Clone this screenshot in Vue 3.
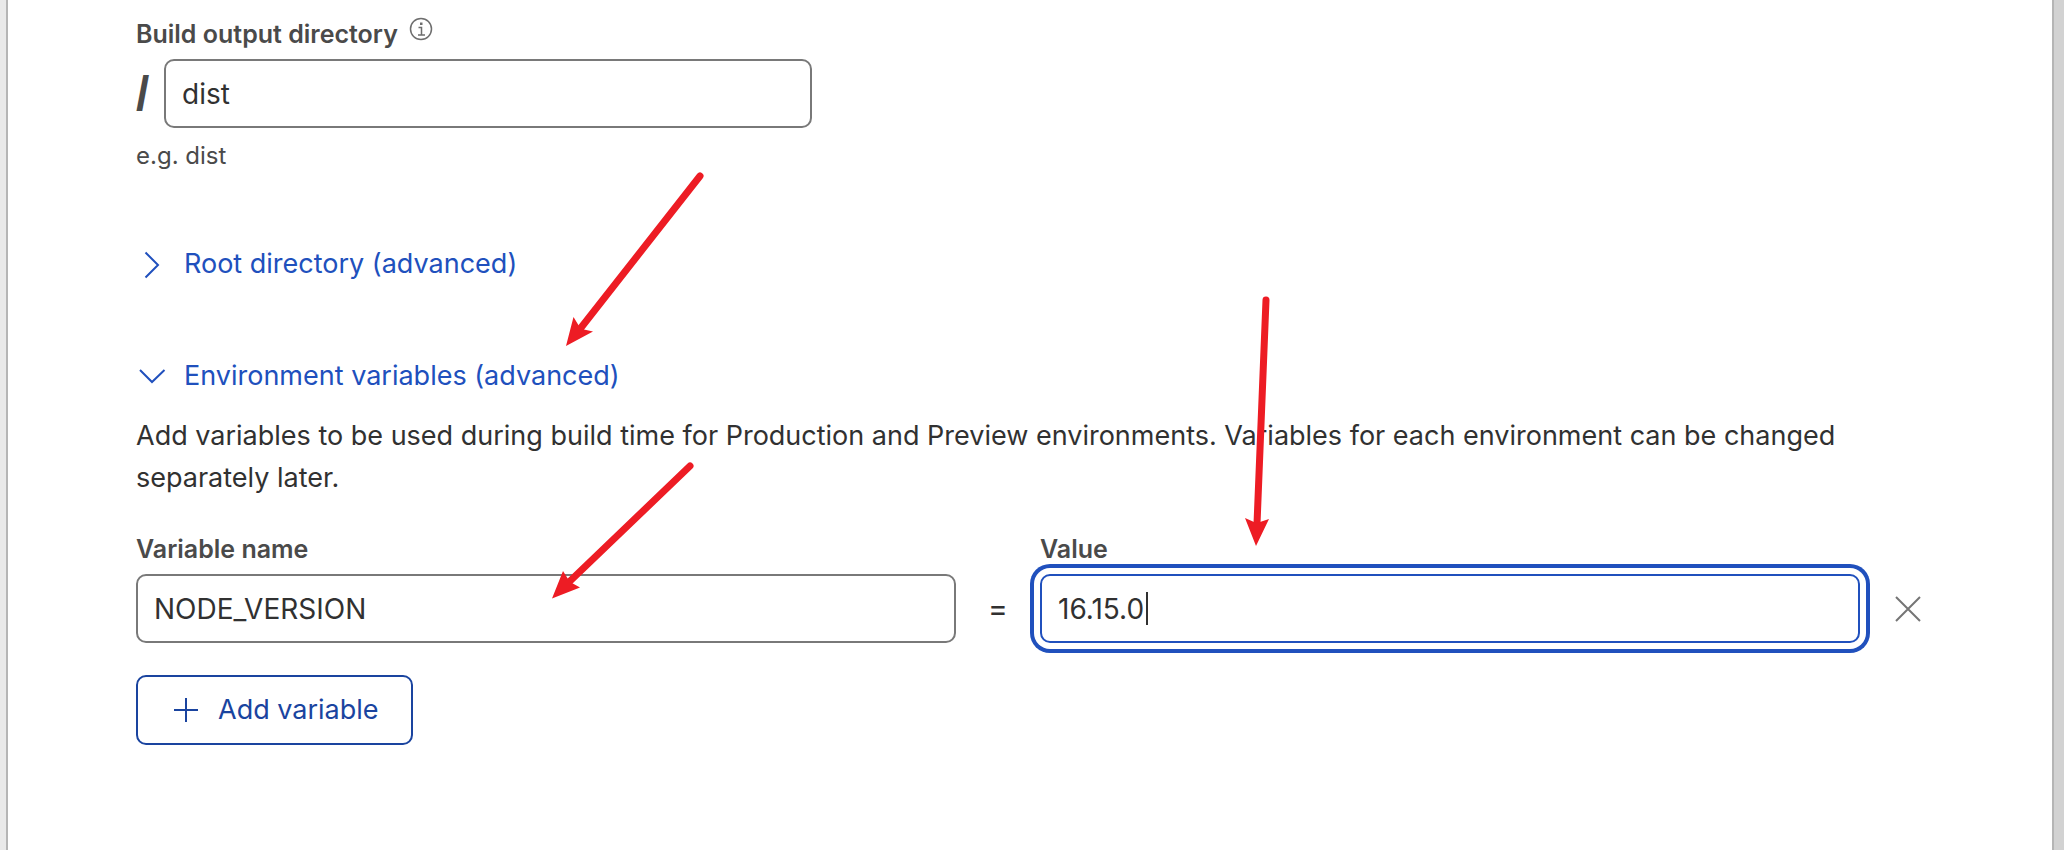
<script setup>
import { ref } from 'vue'

const outputDir = ref('dist')
const variableName = ref('NODE_VERSION')
const variableValue = ref('16.15.0')
</script>

<template>
  <main class="page">
    <form class="panel" @submit.prevent>
      <div class="label-row">
        <label class="label" for="output-dir">Build output directory</label>
        <svg class="info" viewBox="0 0 24 24" aria-hidden="true">
          <circle cx="12" cy="12" r="10.5" />
          <path d="M9.5 10.5h3v7.5M9 18h7" />
          <path class="dot" d="M11 5.5h2.5v2.5h-2.5z" />
        </svg>
      </div>
      <div class="output-row">
        <span class="slash">/</span>
        <input id="output-dir" v-model="outputDir" class="field" type="text" />
      </div>
      <p class="hint">e.g. dist</p>

      <button class="disclosure" type="button" aria-expanded="false">
        <svg class="chevron" viewBox="0 0 32 32" aria-hidden="true"><path d="M9.500 4.500L22 17L9.500 29.500" /></svg>
        Root directory (advanced)
      </button>
      <button class="disclosure" type="button" aria-expanded="true">
        <svg class="chevron" viewBox="0 0 32 32" aria-hidden="true"><path d="M4 10L16 22L28.500 10" /></svg>
        Environment variables (advanced)
      </button>

      <p class="description">
        Add variables to be used during build time for Production and Preview environments. Variables for each
        environment can be changed separately later.
      </p>

      <div class="variable-row">
        <div class="column">
          <label class="label" for="var-name">Variable name</label>
          <input id="var-name" v-model="variableName" class="field" type="text" />
        </div>
        <span class="equals">=</span>
        <div class="column">
          <label class="label" for="var-value">Value</label>
          <div class="value-box">
            <input id="var-value" v-model="variableValue" class="field active" type="text" />
            <span class="caret"></span>
          </div>
        </div>
        <button class="remove" type="button" aria-label="Remove variable">
          <svg viewBox="0 0 28 28" aria-hidden="true"><path d="M2 2L26 26M26 2L2 26" /></svg>
        </button>
      </div>

      <button class="add" type="button">
        <svg viewBox="0 0 24 24" aria-hidden="true"><path d="M12 0V24M0 12H24" /></svg>
        Add variable
      </button>
    </form>

    <svg class="arrows" aria-hidden="true">
      <path class="shaft" d="M700 176L580 329" />
      <path class="head" d="M566 346L573.500 317L579 326L584 329.500L593 331.500Z" />
      <path class="shaft" d="M690 466L568 583" />
      <path class="head" d="M552 598.500L563 571L568 579L572 583L580 587.500Z" />
      <path class="shaft" d="M1266 300L1257 524" />
      <path class="head" d="M1256 546L1245 518L1254 522L1260 522L1269 519Z" />
    </svg>
  </main>
</template>

<style>
body {
  margin: 0;
  background: #fff;
}
</style>

<style scoped>
.page {
  position: relative;
  box-sizing: border-box;
  min-height: 100vh;
  display: flex;
  border-left: 6px solid #e9e9e9;
  border-right: 10px solid #d2d2d2;
  font-family: Inter, "Liberation Sans", sans-serif;
  font-size: 27px;
  line-height: 42px;
  color: #313131;
}
.panel {
  flex: 1;
  display: flex;
  flex-direction: column;
  align-items: flex-start;
  padding: 16px 128px 32px;
  border-left: 2px solid #b5b5b5;
  border-right: 2px solid #b5b5b5;
}
.label-row {
  display: flex;
  gap: 11px;
}
.label {
  font-size: 25px;
  line-height: 36px;
  font-weight: 600;
  color: #4a4a4a;
}
.info {
  width: 24px;
  height: 24px;
  margin-top: 1px;
  fill: none;
  stroke: #6e6e6e;
  stroke-width: 1.5;
}
.info .dot {
  fill: #6e6e6e;
  stroke: none;
}
.output-row {
  display: flex;
  align-items: center;
  width: 100%;
  max-width: 676px;
  margin-top: 7px;
}
.slash {
  flex: none;
  width: 28px;
  font-family: "Liberation Sans", sans-serif;
  font-size: 48px;
  font-weight: 700;
  color: #4a4a4a;
}
.field {
  box-sizing: border-box;
  display: block;
  width: 100%;
  min-width: 0;
  height: 69px;
  padding: 0 16px;
  border: 2px solid #797979;
  border-radius: 10px;
  background: #fff;
  font: inherit;
  font-size: 28px;
  color: #313131;
  outline: none;
}
.field.active {
  border-color: #2050bd;
  box-shadow: 0 0 0 6px #fff, 0 0 0 10px #2050bd;
}
.hint {
  margin: 10px 0 0;
  font-size: 24px;
  line-height: 36px;
  color: #4a4a4a;
}
.disclosure {
  display: flex;
  align-items: center;
  gap: 16px;
  margin-top: 70px;
  padding: 0;
  border: 0;
  background: none;
  font: inherit;
  color: #2050bd;
}
.disclosure:first-of-type {
  margin-top: 69px;
}
.chevron {
  width: 32px;
  height: 32px;
  fill: none;
  stroke: #2050bd;
  stroke-width: 2;
}
.description {
  margin: 18px 0 32px;
}
.variable-row {
  display: flex;
  align-items: flex-end;
  width: 100%;
}
.column {
  flex: 1;
  min-width: 0;
  display: flex;
  flex-direction: column;
  gap: 7px;
}
.equals {
  width: 84px;
  font-size: 30px;
  line-height: 69px;
  text-align: center;
}
.value-box {
  position: relative;
}
.caret {
  position: absolute;
  top: 18px;
  left: 106px;
  width: 2px;
  height: 33px;
  background: #313131;
}
.remove {
  width: 64px;
  height: 69px;
  padding: 0 2px 0 0;
  border: 0;
  background: none;
  display: flex;
  align-items: center;
  justify-content: flex-end;
}
.remove svg {
  width: 28px;
  height: 28px;
  fill: none;
  stroke: #757575;
  stroke-width: 2;
}
.add {
  display: flex;
  align-items: center;
  gap: 20px;
  height: 70px;
  margin-top: 32px;
  padding: 0 32px 0 36px;
  border: 2px solid #1a449f;
  border-radius: 10px;
  background: #fff;
  font: inherit;
  color: #1a449f;
}
.add svg {
  width: 24px;
  height: 24px;
  stroke: #1a449f;
  stroke-width: 2;
}
.arrows {
  position: absolute;
  top: 0;
  left: -6px;
  width: 100%;
  height: 100%;
  overflow: visible;
  pointer-events: none;
}
.shaft {
  stroke: #ed1c24;
  stroke-width: 7;
  stroke-linecap: round;
}
.head {
  fill: #ed1c24;
}
</style>
